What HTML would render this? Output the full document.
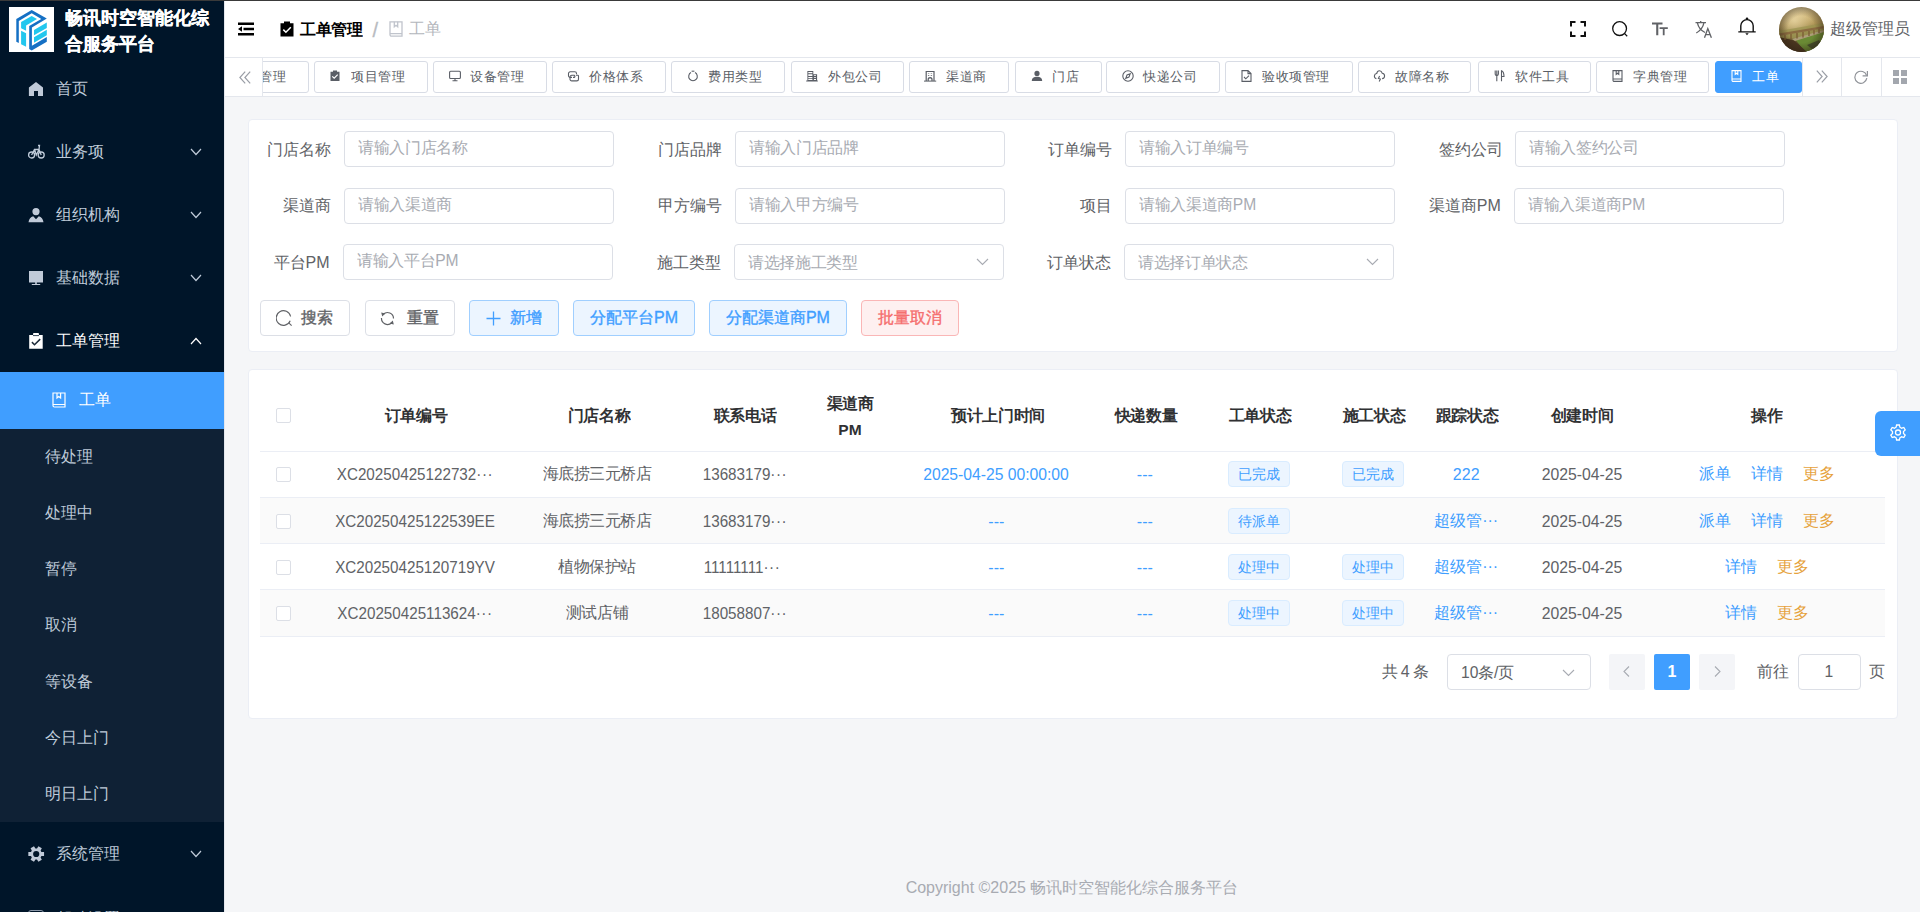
<!DOCTYPE html>
<html><head><meta charset="utf-8">
<style>
*{box-sizing:border-box;margin:0;padding:0}
html,body{width:1920px;height:912px;overflow:hidden}
body{position:relative;background:#f5f6f8;font-family:"Liberation Sans",sans-serif;font-size:16px;color:#606266}
.a{position:absolute}
.t{position:absolute;white-space:nowrap;line-height:16px}
#side{position:absolute;left:0;top:0;width:224px;height:912px;background:#001529;overflow:hidden}
#topline{position:absolute;left:0;top:0;width:1920px;height:1px;background:#3a3a3a;z-index:50}
#hdr{position:absolute;left:224px;top:0;width:1696px;height:58px;background:#fff;border-bottom:1px solid #e4e7ed}
#tabs{position:absolute;left:224px;top:58px;width:1696px;height:39px;background:#fff;border-bottom:1px solid #e4e7ed;overflow:hidden}
.tab{position:absolute;top:3px;height:32px;border:1px solid #d8dce5;border-radius:3px;background:#fff;font-size:13.5px;color:#5a5e66}
.tab .t{line-height:14px;top:8px;transform:scale(.97);transform-origin:0 50%}
.mi{position:absolute;left:0;width:224px;color:#bfcbd9}
.panel{position:absolute;background:#fff;border:1px solid #ebeef5;border-radius:4px}
.inp{position:absolute;width:270px;height:35.5px;border:1px solid #dcdfe6;border-radius:4px;background:#fff}
.inp .t{left:13px;top:8px;color:#a8abb2;font-size:16px;transform:scale(.977);transform-origin:0 50%}
.lbl{position:absolute;color:#606266;text-align:right}
.btn{position:absolute;top:300px;height:36px;border:1px solid #dcdfe6;border-radius:4px;background:#fff;color:#606266}
.btn .t{top:9px;-webkit-text-stroke:.35px currentColor}
.bb{background:#ecf5ff;border-color:#a0cfff;color:#409eff}
.br{background:#fef0f0;border-color:#fab6b6;color:#f56c6c}
.row{position:absolute;left:260px;width:1625px;height:46px;border-bottom:1px solid #ebeef5}
.ck{position:absolute;width:15px;height:15px;border:1px solid #dcdfe6;border-radius:2px;background:#fff}
.ctr{position:absolute;text-align:center;white-space:nowrap;line-height:16px}
.tag{position:absolute;width:62px;height:26px;background:#ecf5ff;border:1px solid #d9ecff;border-radius:4px;color:#409eff;font-size:14px;line-height:24px;text-align:center}
.blue{color:#409eff}
.orange{color:#e6a23c}
</style></head>
<body>
<div id="topline"></div>
<div class="a" style="left:224px;top:0;width:1px;height:912px;background:#e4e7ed;z-index:5"></div>

<!-- SIDEBAR -->
<div id="side">
  <div class="a" style="left:9px;top:7px;width:45px;height:45px;background:#fff">
    <svg width="45" height="45" viewBox="0 0 45 45">
      <path fill="#1570c4" d="M22.7 3 L7.3 12.1 L7.3 34.8 L9.8 36 L9.8 13.9 L22.7 6.3 L32.3 11.9 L20.2 18.9 L20.2 41.9 L22.7 43.4 L37.8 34.8 L37.8 30 L22.9 38.8 L22.9 20.4 L37.8 11.6 Z"/>
      <path fill="#22c7ee" d="M12.1 15.1 L22.7 9.1 L28 12.1 L17.1 18.4 L17.1 23.7 L12.1 21.2 Z M12.1 23.7 L17.1 26.2 L17.1 39.8 L12.1 37.3 Z M25 22.9 L37.8 15.4 L37.8 20.9 L25 28.2 Z M25 30.3 L37.8 22.7 L37.8 28.2 L25 35.8 Z"/>
    </svg>
  </div>
  <div class="t" style="left:65px;top:4.5px;font-size:18px;line-height:26px;font-weight:bold;color:#fff;-webkit-text-stroke:.25px #fff">畅讯时空智能化综<br>合服务平台</div>

  <!-- top-level items -->
  <svg class="a" style="left:28px;top:82px" width="16" height="15" viewBox="0 0 16 15"><path fill="#c0cad8" d="M8 0.1 L15 5.5 L15 14 L10 14 L10 9 L6 9 L6 14 L0.9 14 L0.9 5.5 Z"/></svg>
  <div class="t" style="left:56px;top:81px;color:#bfcbd9">首页</div>

  <svg class="a" style="left:28px;top:144px" width="17" height="15" viewBox="0 0 17 15"><g fill="none" stroke="#bfcbd9" stroke-width="1.3"><circle cx="3.6" cy="11" r="3"/><circle cx="13.2" cy="11" r="3"/><path d="M3.6 11 L6.5 5.5 L11 5.5 L13.2 11 M6.5 5.5 L8.3 11 L11 5.5 M10 1.5 L11.5 1.5 L11 5.5"/></g></svg>
  <div class="t" style="left:56px;top:144px;color:#bfcbd9">业务项</div>
  <svg class="a" style="left:190px;top:148px" width="12" height="8" viewBox="0 0 12 8"><path d="M1 1 L6 6.5 L11 1" fill="none" stroke="#bfcbd9" stroke-width="1.2"/></svg>

  <svg class="a" style="left:28px;top:207px" width="16" height="16" viewBox="0 0 16 16"><path fill="#c0cad8" d="M8 1 A3.6 3.6 0 1 1 8 8.2 A3.6 3.6 0 1 1 8 1 Z M0.5 15.2 C1 12 2.6 10 5.2 9.3 L8 12.2 L10.8 9.3 C13.4 10 15 12 15.5 15.2 Z"/></svg>
  <div class="t" style="left:56px;top:207px;color:#bfcbd9">组织机构</div>
  <svg class="a" style="left:190px;top:211px" width="12" height="8" viewBox="0 0 12 8"><path d="M1 1 L6 6.5 L11 1" fill="none" stroke="#bfcbd9" stroke-width="1.2"/></svg>

  <svg class="a" style="left:28px;top:270px" width="16" height="16" viewBox="0 0 16 16"><path fill="#c0cad8" d="M1 1 H15 V12.5 H1 Z M7.2 12.5 H8.8 V14 H7.2 Z M3.8 14 H12.2 V15 H3.8 Z"/></svg>
  <div class="t" style="left:56px;top:270px;color:#bfcbd9">基础数据</div>
  <svg class="a" style="left:190px;top:274px" width="12" height="8" viewBox="0 0 12 8"><path d="M1 1 L6 6.5 L11 1" fill="none" stroke="#bfcbd9" stroke-width="1.2"/></svg>

  <svg class="a" style="left:29px;top:332px" width="14" height="17" viewBox="0 0 14 17"><path fill="#fff" d="M0.2 3 H4 L4.3 1 H9.7 L10 3 H13.7 V16.7 H0.2 Z"/><path d="M4 3.6 H10" stroke="#001529" stroke-width="0.8"/><path d="M2.9 10.1 L5.5 12.7 L11.2 7.1" fill="none" stroke="#1d2b3a" stroke-width="1.5"/></svg>
  <div class="t" style="left:56px;top:333px;color:#fff">工单管理</div>
  <svg class="a" style="left:190px;top:337px" width="12" height="8" viewBox="0 0 12 8"><path d="M1 7 L6 1.5 L11 7" fill="none" stroke="#fff" stroke-width="1.2"/></svg>

  <!-- submenu -->
  <div class="a" style="left:0;top:372px;width:224px;height:450px;background:#0f2135"></div>
  <div class="a" style="left:0;top:372px;width:224px;height:57px;background:#409eff"></div>
  <svg class="a" style="left:52px;top:392px" width="14" height="16" viewBox="0 0 14 16"><g fill="none" stroke="#fff" stroke-width="1.2"><path d="M1 1 H13 V15 H2.5 A1.5 1.5 0 0 1 1 13.5 Z M1 12.5 H13"/><path d="M5 1 V6 L6.8 4.5 L8.6 6 V1"/></g></svg>
  <div class="t" style="left:79px;top:392px;color:#fff">工单</div>
  <div class="t" style="left:45px;top:449px;color:#bfcbd9">待处理</div>
  <div class="t" style="left:45px;top:505px;color:#bfcbd9">处理中</div>
  <div class="t" style="left:45px;top:561px;color:#bfcbd9">暂停</div>
  <div class="t" style="left:45px;top:617px;color:#bfcbd9">取消</div>
  <div class="t" style="left:45px;top:674px;color:#bfcbd9">等设备</div>
  <div class="t" style="left:45px;top:730px;color:#bfcbd9">今日上门</div>
  <div class="t" style="left:45px;top:786px;color:#bfcbd9">明日上门</div>

  <svg class="a" style="left:28px;top:846px" width="17" height="16" viewBox="0 0 17 16"><path fill="#c0cad8" fill-rule="evenodd" d="M13.39 5.90 L16.06 6.04 L16.06 9.96 L13.39 10.10 L12.61 11.45 L13.83 13.83 L10.43 15.79 L8.98 13.55 L7.42 13.55 L5.97 15.79 L2.57 13.83 L3.79 11.45 L3.01 10.10 L0.34 9.96 L0.34 6.04 L3.01 5.90 L3.79 4.55 L2.57 2.17 L5.97 0.21 L7.42 2.45 L8.98 2.45 L10.43 0.21 L13.83 2.17 L12.61 4.55 Z M11.30 8 A3.1 3.1 0 1 0 5.10 8 A3.1 3.1 0 1 0 11.30 8 Z"/></svg>
  <div class="t" style="left:56px;top:846px;color:#bfcbd9">系统管理</div>
  <svg class="a" style="left:190px;top:850px" width="12" height="8" viewBox="0 0 12 8"><path d="M1 1 L6 6.5 L11 1" fill="none" stroke="#bfcbd9" stroke-width="1.2"/></svg>

  <div class="a" style="left:28px;top:910px;width:16px;height:10px;border:1.5px solid #8a97a8;border-radius:3px"></div>
  <div class="t" style="left:56px;top:911px;color:#bfcbd9">帮助设置</div>
</div>

<!-- HEADER -->
<div id="hdr">
  <svg class="a" style="left:14px;top:22px" width="16" height="14" viewBox="0 0 16 14"><path fill="#000" d="M0 0.4 H16 V2.9 H0 Z M5.5 5.7 H16 V8.2 H5.5 Z M0 11.1 H16 V13.6 H0 Z M0 7 L4 4.3 V9.7 Z"/></svg>
  <svg class="a" style="left:56px;top:21px" width="14" height="16" viewBox="0 0 14 16"><path fill="#000" d="M0.5 2.2 H4 V0.6 H10 V2.2 H13.5 V15.4 H0.5 Z"/><path d="M3.3 8.6 L5.9 11.2 L10.8 6.3" fill="none" stroke="#fff" stroke-width="1.5"/></svg>
  <div class="t" style="left:76px;top:21.5px;font-weight:bold;color:#000;transform:scale(.97);transform-origin:0 50%">工单管理</div>
  <div class="t" style="left:148.5px;top:20px;color:#b8bbc1;font-size:20px;line-height:20px;-webkit-text-stroke:.3px #b8bbc1">/</div>
  <svg class="a" style="left:165px;top:21px" width="14" height="16" viewBox="0 0 14 16"><g fill="none" stroke="#c0c4cc" stroke-width="1.3"><path d="M1 0.8 H13 V15.2 H2.5 A1.5 1.5 0 0 1 1 13.7 Z M1 12.6 H13"/><path d="M5.3 0.8 V5.8 L7 4.3 L8.7 5.8 V0.8"/></g></svg>
  <div class="t" style="left:185px;top:21px;color:#b4b7bd">工单</div>

  <svg class="a" style="left:1346px;top:21px" width="16" height="16" viewBox="0 0 16 16"><path fill="none" stroke="#111" stroke-width="2" d="M1 5.5 V1 H5.5 M10.5 1 H15 V5.5 M15 10.5 V15 H10.5 M5.5 15 H1 V10.5"/></svg>
  <svg class="a" style="left:1388px;top:21px" width="16" height="16" viewBox="0 0 16 16"><g fill="none" stroke="#111" stroke-width="1.3"><circle cx="7.6" cy="7.6" r="6.9"/><path d="M12.4 12.4 L15.2 15.2"/></g></svg>
  <svg class="a" style="left:1428px;top:22px" width="16" height="14" viewBox="0 0 16 14"><path fill="#606266" d="M0 0.6 H10.5 V2.6 H6.3 V13.2 H4.2 V2.6 H0 Z M7.6 5.3 H15.8 V7.1 H12.6 V13.2 H10.8 V7.1 H7.6 Z"/></svg>
  <svg class="a" style="left:1471px;top:21px" width="18" height="17" viewBox="0 0 18 17"><g fill="none" stroke="#606266" stroke-width="1.3"><path d="M0.5 1.7 H11 M5.7 0 V1.7 M2.3 1.7 C3.5 7 6.5 10 10 11.5 M9 1.7 C8 6.5 5 10 1.3 12"/><path d="M9.5 16.8 L12.8 7.5 L16.4 16.8 M10.6 13.6 H15.2"/></g></svg>
  <svg class="a" style="left:1514px;top:17px" width="18" height="20" viewBox="0 0 18 20"><g fill="none" stroke="#111" stroke-width="1.4"><path d="M2.8 14.5 V8.8 A6.2 6.2 0 0 1 15.2 8.8 V14.5 M0.3 14.9 H17.7"/></g><circle cx="9" cy="1.7" r="1.3" fill="#111"/><path d="M7.3 16.2 H10.7 L9 18.3 Z" fill="#111"/></svg>
  <svg class="a" style="left:1555px;top:7px" width="45" height="45" viewBox="0 0 45 45">
    <defs><clipPath id="av"><circle cx="22.5" cy="22.5" r="22.5"/></clipPath>
    <linearGradient id="avg" x1="0" y1="0" x2="0.1" y2="1"><stop offset="0" stop-color="#eadcae"/><stop offset=".2" stop-color="#d6bd80"/><stop offset=".42" stop-color="#b49a5a"/><stop offset=".6" stop-color="#8a7a40"/><stop offset="1" stop-color="#3a2c1c"/></linearGradient>
    <radialGradient id="avs" cx=".35" cy=".3" r=".45"><stop offset="0" stop-color="#f6e6b8" stop-opacity=".6"/><stop offset="1" stop-color="#f6e6b8" stop-opacity="0"/></radialGradient>
    <radialGradient id="avv" cx=".5" cy=".5" r=".5"><stop offset=".6" stop-color="#2a1e10" stop-opacity="0"/><stop offset="1" stop-color="#2a1e10" stop-opacity=".45"/></radialGradient></defs>
    <g clip-path="url(#av)">
      <rect width="45" height="45" fill="url(#avg)"/>
      <rect width="45" height="45" fill="url(#avs)"/>
      <path d="M0 24 L45 16 L45 30 L0 32 Z" fill="#9c9450" opacity=".75"/>
      <path d="M16 32 L45 24.5 L45 40 L26 45 Z" fill="#6a8a34"/>
      <path d="M0 30 L15 33.5 L28 45 L0 45 Z" fill="#4a3620"/>
      <path d="M13 32 L45 23 L45 25 L16 34 Z" fill="#ad9d78"/>
      <path d="M0 26.5 L45 19 L45 21.3 L0 29 Z" fill="#8a6a40"/>
      <g stroke="#7a5a34" stroke-width="1.3"><path d="M6 28 V33 M12 27 V32.5 M18 26 V31.5 M24 25 V30.5 M30 24 V29 M35 23 V27.5 M40 22 V26"/></g>
      <path d="M28 38 L40 33 L43 37 L33 42 Z" fill="#2e2a26" opacity=".6"/>
      <rect width="45" height="45" fill="url(#avv)"/>
    </g>
  </svg>
  <div class="t" style="left:1606px;top:21px;color:#606266">超级管理员</div>
</div>

<!-- TABS -->
<div id="tabs">
  <div class="tab" style="left:-29.4px;width:114.0px"><svg class="a" style="left:15px;top:8px" width="12" height="12" viewBox="0 0 12 12" overflow="visible"><path fill="#5a5e66" d="M0.5 1.8 H3 V0.5 H7 V1.8 H9.5 V11 H0.5 Z"/><path d="M2.3 6.3 L4.2 8.2 L7.7 4.7" fill="none" stroke="#fff" stroke-width="1.2"/></svg><div class="t" style="left:36px">合同管理</div></div>
  <div class="tab" style="left:90.0px;width:114.0px"><svg class="a" style="left:15px;top:8px" width="12" height="12" viewBox="0 0 12 12" overflow="visible"><path fill="#5a5e66" d="M0.5 1.8 H3 V0.5 H7 V1.8 H9.5 V11 H0.5 Z"/><path d="M2.3 6.3 L4.2 8.2 L7.7 4.7" fill="none" stroke="#fff" stroke-width="1.2"/></svg><div class="t" style="left:36px">项目管理</div></div>
  <div class="tab" style="left:209.4px;width:113.5px"><svg class="a" style="left:15px;top:8px" width="12" height="12" viewBox="0 0 12 12" overflow="visible"><g fill="none" stroke="#5a5e66" stroke-width="1.1"><rect x="0.6" y="1.2" width="10.8" height="7.3" rx="1"/><path d="M6 8.5 V10.8 M3.5 10.8 H8.5"/></g></svg><div class="t" style="left:36px">设备管理</div></div>
  <div class="tab" style="left:328.4px;width:113.5px"><svg class="a" style="left:15px;top:8px" width="12" height="12" viewBox="0 0 12 12" overflow="visible"><g fill="none" stroke="#5a5e66" stroke-width="1.1"><path d="M4 7.4 H2.2 A1.7 1.7 0 0 1 0.5 5.7 V3.5 A1.7 1.7 0 0 1 2.2 1.8 H6.8 A1.7 1.7 0 0 1 8.5 3.5 V4.2"/><path d="M8 5.3 H9.8 A0.8 0.8 0 0 1 10.5 6 V9.2 A1.7 1.7 0 0 1 8.8 10.9 H3.7 A1.7 1.7 0 0 1 2 9.2 V7 A1.7 1.7 0 0 1 3.7 5.3 H6.3 A1.2 1.2 0 0 1 6.3 7.4 H5"/></g></svg><div class="t" style="left:36px">价格体系</div></div>
  <div class="tab" style="left:447.4px;width:113.5px"><svg class="a" style="left:15px;top:8px" width="12" height="12" viewBox="0 0 12 12" overflow="visible"><g fill="none" stroke="#5a5e66" stroke-width="1.1"><path d="M4 2.6 A4.3 4.3 0 1 0 8 2.6"/><path d="M4.6 1.2 H7.4"/></g></svg><div class="t" style="left:36px">费用类型</div></div>
  <div class="tab" style="left:566.5px;width:113.2px"><svg class="a" style="left:15px;top:8px" width="12" height="12" viewBox="0 0 12 12" overflow="visible"><path fill="#5a5e66" d="M0.4 0.9 H6.3 V11 H0.4 Z M6.3 4.2 H10.1 V11 H6.3 Z M-0.8 10.5 H10.8 V11.6 H-0.8 Z"/><path fill="#fff" d="M1.3 2.1 H5.4 V3.3 H1.3 Z M1.3 4.3 H5.4 V5.9 H1.3 Z M1.3 7 H5.4 V8.2 H1.3 Z M1.3 9 H5.4 V10.1 H1.3 Z M6.9 5.2 H9 V6 H6.9 Z M6.9 7.2 H9 V8 H6.9 Z M6.9 9.1 H9 V9.9 H6.9 Z"/></svg><div class="t" style="left:36px">外包公司</div></div>
  <div class="tab" style="left:685.4px;width:100.0px"><svg class="a" style="left:15px;top:8px" width="12" height="12" viewBox="0 0 12 12" overflow="visible"><g fill="none" stroke="#5a5e66" stroke-width="1.2"><path d="M1.2 11 V1.5 H9 V11"/><path d="M-1 11.1 H11.2" stroke-width="1"/></g><path fill="#5a5e66" d="M2.9 2.9 H4.3 V3.6 H2.9 Z M5.7 2.9 H7.1 V3.6 H5.7 Z M2.9 5.2 H4.3 V6 H2.9 Z M5.7 5.2 H7.1 V6 H5.7 Z M2.6 11 V9.2 C2.6 8 3.8 7.1 5.1 7.1 C6.4 7.1 7.6 8 7.6 9.2 V11 H6.4 V9.6 C6.4 9 5.8 8.5 5.1 8.5 C4.4 8.5 3.8 9 3.8 9.6 V11 Z"/></svg><div class="t" style="left:36px">渠道商</div></div>
  <div class="tab" style="left:790.5px;width:87.0px"><svg class="a" style="left:15px;top:8px" width="12" height="12" viewBox="0 0 12 12" overflow="visible"><path fill="#5a5e66" d="M6 0.8 A2.6 2.6 0 1 1 6 6 A2.6 2.6 0 1 1 6 0.8 Z M0.8 11 C0.8 8 3 6.8 6 6.8 C9 6.8 11.2 8 11.2 11 Z"/></svg><div class="t" style="left:36px">门店</div></div>
  <div class="tab" style="left:882.3px;width:114.0px"><svg class="a" style="left:15px;top:8px" width="12" height="12" viewBox="0 0 12 12" overflow="visible"><g fill="none" stroke="#5a5e66" stroke-width="1.1"><circle cx="6" cy="6" r="5.2"/><path d="M8.2 3.8 L5 5 L3.8 8.2 L7 7 Z"/></g></svg><div class="t" style="left:36px">快递公司</div></div>
  <div class="tab" style="left:1001.4px;width:127.5px"><svg class="a" style="left:15px;top:8px" width="12" height="12" viewBox="0 0 12 12" overflow="visible"><g fill="none" stroke="#5a5e66" stroke-width="1.1"><path d="M1 0.6 H7 L10 3.6 V11.4 H1 Z M7 0.6 V3.6 H10"/><path d="M3 7 L4.8 8.8 L8 5.6"/></g></svg><div class="t" style="left:36px">验收项管理</div></div>
  <div class="tab" style="left:1134.1px;width:113.3px"><svg class="a" style="left:15px;top:8px" width="12" height="12" viewBox="0 0 12 12" overflow="visible"><g fill="none" stroke="#5a5e66" stroke-width="1.1"><path d="M2.4 8.6 C1 8.4 0.3 7.3 0.4 5.9 C0.6 4.4 1.7 3.6 2.7 3.5 C3.1 1.8 4.2 0.8 5.4 0.8 C6.8 0.8 7.8 1.8 8.2 3.2 C9.6 3.4 10.6 4.5 10.6 6 C10.6 7.5 9.6 8.5 8.1 8.6"/><path d="M5.6 5.9 L4.4 8.5 L6.4 9 L5.2 11.6"/></g></svg><div class="t" style="left:36px">故障名称</div></div>
  <div class="tab" style="left:1253.5px;width:113.3px"><svg class="a" style="left:15px;top:8px" width="12" height="12" viewBox="0 0 12 12" overflow="visible"><g fill="none" stroke="#5a5e66" stroke-width="1.1"><path d="M1.2 0.6 V4 A1.6 1.6 0 0 0 4.4 4 V0.6 M2.8 0.6 V11.2 M7.5 11.2 V0.8 C9.5 1.5 10 4 10 6.5 H7.5"/></g></svg><div class="t" style="left:36px">软件工具</div></div>
  <div class="tab" style="left:1372.2px;width:113.3px"><svg class="a" style="left:15px;top:8px" width="12" height="12" viewBox="0 0 12 12" overflow="visible"><g fill="none" stroke="#5a5e66" stroke-width="1.1"><path d="M1 0.6 H10 V11.4 H2.2 A1.2 1.2 0 0 1 1 10.2 Z M1 9 H10"/><path d="M4.2 0.6 V4.3 L5.5 3.3 L6.8 4.3 V0.6"/></g></svg><div class="t" style="left:36px">字典管理</div></div>
  <div class="tab" style="left:1491.0px;width:87.0px;background:#409eff;border-color:#409eff;color:#fff"><svg class="a" style="left:15px;top:8px" width="12" height="12" viewBox="0 0 12 12" overflow="visible"><g fill="none" stroke="#fff" stroke-width="1.1"><path d="M1 0.6 H10 V11.4 H2.2 A1.2 1.2 0 0 1 1 10.2 Z M1 9 H10"/><path d="M4.2 0.6 V4.3 L5.5 3.3 L6.8 4.3 V0.6"/></g></svg><div class="t" style="left:36px">工单</div></div>
  <div class="a" style="left:0;top:0;width:39px;height:38px;background:#fff;border-right:1px solid #e4e7ed"></div>
  <svg class="a" style="left:15px;top:12.5px" width="12" height="13" viewBox="0 0 12 13"><path d="M6.2 0.7 L0.9 6.5 L6.2 12.3 M11.2 0.7 L5.9 6.5 L11.2 12.3" fill="none" stroke="#9a9ea6" stroke-width="1.2"/></svg>
  <div class="a" style="left:1578px;top:0;width:118px;height:38px;background:#fff"></div>
  <div class="a" style="left:1578px;top:0;width:1px;height:38px;background:#e4e7ed"></div>
  <div class="a" style="left:1617px;top:0;width:1px;height:38px;background:#e4e7ed"></div>
  <div class="a" style="left:1657px;top:0;width:1px;height:38px;background:#e4e7ed"></div>
  <svg class="a" style="left:1592px;top:12px" width="12" height="13" viewBox="0 0 12 13"><path d="M0.8 0.7 L6.1 6.5 L0.8 12.3 M5.8 0.7 L11.1 6.5 L5.8 12.3" fill="none" stroke="#9a9ea6" stroke-width="1.2"/></svg>
  <svg class="a" style="left:1630px;top:12px" width="14" height="14" viewBox="0 0 14 14"><path d="M12.6 5.5 A6 6 0 1 0 12.8 8.2" fill="none" stroke="#909399" stroke-width="1.2"/><path d="M13.4 1 V5.9 H8.6" fill="none" stroke="#909399" stroke-width="1.2"/></svg>
  <svg class="a" style="left:1669px;top:12px" width="14" height="14" viewBox="0 0 14 14"><path fill="#a3a7ae" d="M0 0 H6 V6 H0 Z M8 0 H14 V6 H8 Z M0 8 H6 V14 H0 Z M8 8 H14 V14 H8 Z"/></svg>
</div>

<!-- FORM -->
<div class="panel" style="left:248px;top:119px;width:1650px;height:233px"></div>
<div class="lbl t" style="left:230.5px;top:141.5px;width:100px">门店名称</div>
<div class="inp" style="left:344.0px;top:131.2px"><div class="t">请输入门店名称</div></div>
<div class="lbl t" style="left:621.5px;top:141.5px;width:100px">门店品牌</div>
<div class="inp" style="left:735.0px;top:131.2px"><div class="t">请输入门店品牌</div></div>
<div class="lbl t" style="left:1011.5px;top:141.5px;width:100px">订单编号</div>
<div class="inp" style="left:1125.0px;top:131.2px"><div class="t">请输入订单编号</div></div>
<div class="lbl t" style="left:1402.8px;top:141.5px;width:100px">签约公司</div>
<div class="inp" style="left:1515.0px;top:131.2px"><div class="t">请输入签约公司</div></div>
<div class="lbl t" style="left:230.5px;top:198.3px;width:100px">渠道商</div>
<div class="inp" style="left:344.0px;top:188px"><div class="t">请输入渠道商</div></div>
<div class="lbl t" style="left:621.5px;top:198.3px;width:100px">甲方编号</div>
<div class="inp" style="left:735.0px;top:188px"><div class="t">请输入甲方编号</div></div>
<div class="lbl t" style="left:1011.5px;top:198.3px;width:100px">项目</div>
<div class="inp" style="left:1125.0px;top:188px"><div class="t">请输入渠道商PM</div></div>
<div class="lbl t" style="left:1400.8px;top:198.3px;width:100px">渠道商PM</div>
<div class="inp" style="left:1514.0px;top:188px"><div class="t">请输入渠道商PM</div></div>
<div class="lbl t" style="left:229.5px;top:254.6px;width:100px">平台PM</div>
<div class="inp" style="left:343.0px;top:244px"><div class="t">请输入平台PM</div></div>
<div class="lbl t" style="left:620.5px;top:254.6px;width:100px">施工类型</div>
<div class="inp" style="left:734.0px;top:244px"><div class="t" style="top:10px">请选择施工类型</div><svg class="a" style="left:241px;top:13px" width="13" height="8" viewBox="0 0 13 8"><path d="M1 1 L6.5 6.5 L12 1" fill="none" stroke="#a8abb2" stroke-width="1.1"/></svg></div>
<div class="lbl t" style="left:1010.5px;top:254.6px;width:100px">订单状态</div>
<div class="inp" style="left:1124.0px;top:244px"><div class="t" style="top:10px">请选择订单状态</div><svg class="a" style="left:241px;top:13px" width="13" height="8" viewBox="0 0 13 8"><path d="M1 1 L6.5 6.5 L12 1" fill="none" stroke="#a8abb2" stroke-width="1.1"/></svg></div>
<div class="btn " style="left:260.3px;width:90.0px"><svg class="a" style="left:15px;top:9px" width="17" height="17" viewBox="0 0 17 17"><g fill="none" stroke="#606266" stroke-width="1.1"><path d="M14.2 10.8 A7.3 7.3 0 1 1 14.6 6.5"/><path d="M12.8 12.8 L15.6 15.6"/></g></svg><div class="t" style="left:40px">搜索</div></div>
<div class="btn " style="left:364.5px;width:90.0px"><svg class="a" style="left:14.5px;top:10px" width="15" height="15" viewBox="0 0 15 15"><g fill="none" stroke="#606266" stroke-width="1.2"><path d="M3.3 3.3 A6 6 0 0 1 13.5 7.6"/><path d="M1.5 7 A6 6 0 0 0 11.7 11.7"/></g><path fill="#606266" d="M1.2 1.6 L5.4 2.4 L2.2 5.6 Z M13.8 13.4 L9.6 12.6 L12.8 9.4 Z"/></svg><div class="t" style="left:41px">重置</div></div>
<div class="btn bb" style="left:469.2px;width:89.5px"><svg class="a" style="left:16px;top:10px" width="15" height="15" viewBox="0 0 15 15"><path d="M7.5 0.5 V14.5 M0.5 7.5 H14.5" fill="none" stroke="#409eff" stroke-width="1.3"/></svg><div class="t" style="left:40px">新增</div></div>
<div class="btn bb" style="left:573.4px;width:121.3px"><div class="t" style="left:0;width:100%;text-align:center">分配平台PM</div></div>
<div class="btn bb" style="left:709.2px;width:137.4px"><div class="t" style="left:0;width:100%;text-align:center">分配渠道商PM</div></div>
<div class="btn br" style="left:860.5px;width:98.2px"><div class="t" style="left:0;width:100%;text-align:center">批量取消</div></div>
<!-- TABLE -->
<div class="panel" style="left:248px;top:369px;width:1650px;height:350px"></div>
<div class="a" style="left:260px;top:451px;width:1625px;height:1px;background:#ebeef5"></div>
<div class="a" style="left:260px;top:497px;width:1625px;height:1px;background:#ebeef5"></div>
<div class="a" style="left:260px;top:498px;width:1625px;height:45px;background:#fafafa"></div>
<div class="a" style="left:260px;top:543px;width:1625px;height:1px;background:#ebeef5"></div>
<div class="a" style="left:260px;top:589px;width:1625px;height:1px;background:#ebeef5"></div>
<div class="a" style="left:260px;top:590px;width:1625px;height:46px;background:#fafafa"></div>
<div class="a" style="left:260px;top:636px;width:1625px;height:1px;background:#ebeef5"></div>
<div class="ck" style="left:276px;top:408px"></div>
<div class="ctr" style="left:296.0px;top:408.0px;width:240px;font-weight:bold;color:#303133;transform:scale(.97)">订单编号</div>
<div class="ctr" style="left:478.7px;top:408.0px;width:240px;font-weight:bold;color:#303133;transform:scale(.97)">门店名称</div>
<div class="ctr" style="left:624.7px;top:408.0px;width:240px;font-weight:bold;color:#303133;transform:scale(.97)">联系电话</div>
<div class="ctr" style="left:877.8px;top:408.0px;width:240px;font-weight:bold;color:#303133;transform:scale(.97)">预计上门时间</div>
<div class="ctr" style="left:1025.8px;top:408.0px;width:240px;font-weight:bold;color:#303133;transform:scale(.97)">快递数量</div>
<div class="ctr" style="left:1139.8px;top:408.0px;width:240px;font-weight:bold;color:#303133;transform:scale(.97)">工单状态</div>
<div class="ctr" style="left:1253.5px;top:408.0px;width:240px;font-weight:bold;color:#303133;transform:scale(.97)">施工状态</div>
<div class="ctr" style="left:1347.2px;top:408.0px;width:240px;font-weight:bold;color:#303133;transform:scale(.97)">跟踪状态</div>
<div class="ctr" style="left:1461.9px;top:408.0px;width:240px;font-weight:bold;color:#303133;transform:scale(.97)">创建时间</div>
<div class="ctr" style="left:1647.4px;top:408.0px;width:240px;font-weight:bold;color:#303133;transform:scale(.97)">操作</div>
<div class="ctr" style="left:790px;top:390px;width:120px;font-weight:bold;color:#303133;line-height:27px;transform:scale(.97)">渠道商<br>PM</div>
<div class="ck" style="left:276px;top:466.5px"></div>
<div class="ctr" style="left:294.5px;top:467.0px;width:240px;transform:scaleX(.95)">XC20250425122732<span style="letter-spacing:.6px">···</span></div>
<div class="ctr" style="left:476.7px;top:466.0px;width:240px;transform:scale(.973)">海底捞三元桥店</div>
<div class="ctr" style="left:624.7px;top:467.0px;width:240px;transform:scaleX(.95)">13683179<span style="letter-spacing:.6px">···</span></div>
<div class="ctr" style="left:876.3px;top:467.0px;width:240px;color:#409eff;transform:scaleX(.98)">2025-04-25 00:00:00</div>
<div class="ctr" style="left:1024.8px;top:467.0px;width:240px;color:#409eff;transform:none">---</div>
<div class="tag" style="left:1227.8px;top:461px">已完成</div>
<div class="tag" style="left:1341.5px;top:461px">已完成</div>
<div class="ctr" style="left:1346.2px;top:467.0px;width:240px;color:#409eff;transform:none">222</div>
<div class="ctr" style="left:1461.9px;top:467.0px;width:240px;transform:scaleX(.985)">2025-04-25</div>
<div class="t" style="left:1699.3px;top:466px;color:#409eff">派单</div>
<div class="t" style="left:1750.8px;top:466px;color:#409eff">详情</div>
<div class="t" style="left:1802.7px;top:466px;color:#e6a23c">更多</div>
<div class="ck" style="left:276px;top:513.5px"></div>
<div class="ctr" style="left:294.5px;top:514.0px;width:240px;transform:scaleX(.95)">XC20250425122539EE</div>
<div class="ctr" style="left:476.7px;top:513.0px;width:240px;transform:scale(.973)">海底捞三元桥店</div>
<div class="ctr" style="left:624.7px;top:514.0px;width:240px;transform:scaleX(.95)">13683179<span style="letter-spacing:.6px">···</span></div>
<div class="ctr" style="left:876.3px;top:514.0px;width:240px;color:#409eff;transform:none">---</div>
<div class="ctr" style="left:1024.8px;top:514.0px;width:240px;color:#409eff;transform:none">---</div>
<div class="tag" style="left:1227.8px;top:508px">待派单</div>
<div class="ctr" style="left:1346.2px;top:513.0px;width:240px;color:#409eff;transform:none">超级管<span style="letter-spacing:0px">···</span></div>
<div class="ctr" style="left:1461.9px;top:514.0px;width:240px;transform:scaleX(.985)">2025-04-25</div>
<div class="t" style="left:1699.3px;top:513px;color:#409eff">派单</div>
<div class="t" style="left:1750.8px;top:513px;color:#409eff">详情</div>
<div class="t" style="left:1802.7px;top:513px;color:#e6a23c">更多</div>
<div class="ck" style="left:276px;top:559.5px"></div>
<div class="ctr" style="left:294.5px;top:560.0px;width:240px;transform:scaleX(.95)">XC20250425120719YV</div>
<div class="ctr" style="left:476.7px;top:559.0px;width:240px;transform:scale(.973)">植物保护站</div>
<div class="ctr" style="left:621.7px;top:560.0px;width:240px;transform:scaleX(.95)">11111111<span style="letter-spacing:.6px">···</span></div>
<div class="ctr" style="left:876.3px;top:560.0px;width:240px;color:#409eff;transform:none">---</div>
<div class="ctr" style="left:1024.8px;top:560.0px;width:240px;color:#409eff;transform:none">---</div>
<div class="tag" style="left:1227.8px;top:554px">处理中</div>
<div class="tag" style="left:1341.5px;top:554px">处理中</div>
<div class="ctr" style="left:1346.2px;top:559.0px;width:240px;color:#409eff;transform:none">超级管<span style="letter-spacing:0px">···</span></div>
<div class="ctr" style="left:1461.9px;top:560.0px;width:240px;transform:scaleX(.985)">2025-04-25</div>
<div class="t" style="left:1725.4px;top:559px;color:#409eff">详情</div>
<div class="t" style="left:1776.9px;top:559px;color:#e6a23c">更多</div>
<div class="ck" style="left:276px;top:605.5px"></div>
<div class="ctr" style="left:294.5px;top:606.0px;width:240px;transform:scaleX(.95)">XC20250425113624<span style="letter-spacing:.6px">···</span></div>
<div class="ctr" style="left:476.7px;top:605.0px;width:240px;transform:scale(.973)">测试店铺</div>
<div class="ctr" style="left:624.7px;top:606.0px;width:240px;transform:scaleX(.95)">18058807<span style="letter-spacing:.6px">···</span></div>
<div class="ctr" style="left:876.3px;top:606.0px;width:240px;color:#409eff;transform:none">---</div>
<div class="ctr" style="left:1024.8px;top:606.0px;width:240px;color:#409eff;transform:none">---</div>
<div class="tag" style="left:1227.8px;top:600px">处理中</div>
<div class="tag" style="left:1341.5px;top:600px">处理中</div>
<div class="ctr" style="left:1346.2px;top:605.0px;width:240px;color:#409eff;transform:none">超级管<span style="letter-spacing:0px">···</span></div>
<div class="ctr" style="left:1461.9px;top:606.0px;width:240px;transform:scaleX(.985)">2025-04-25</div>
<div class="t" style="left:1725.4px;top:605px;color:#409eff">详情</div>
<div class="t" style="left:1776.9px;top:605px;color:#e6a23c">更多</div>
<div class="t" style="left:1382px;top:664px;color:#606266;word-spacing:-1.6px">共 4 条</div>
<div class="inp" style="left:1447px;top:654px;width:144px;height:36px"><div class="t" style="left:13px;top:10px;color:#606266;font-size:16px">10条/页</div><svg class="a" style="left:114px;top:14px" width="13" height="8" viewBox="0 0 13 8"><path d="M1 1 L6.5 6.5 L12 1" fill="none" stroke="#a8abb2" stroke-width="1.1"/></svg></div>
<div class="a" style="left:1609px;top:654px;width:36px;height:36px;background:#f4f5f8;border-radius:2px"><svg class="a" style="left:14px;top:12px" width="7" height="11" viewBox="0 0 7 11"><path d="M6 0.5 L1 5.5 L6 10.5" fill="none" stroke="#a8abb2" stroke-width="1.1"/></svg></div>
<div class="a" style="left:1654px;top:654px;width:36px;height:36px;background:#409eff;border-radius:2px;color:#fff;font-weight:bold;text-align:center;line-height:36px;font-size:16px">1</div>
<div class="a" style="left:1699px;top:654px;width:36px;height:36px;background:#f4f5f8;border-radius:2px"><svg class="a" style="left:15px;top:12px" width="7" height="11" viewBox="0 0 7 11"><path d="M1 0.5 L6 5.5 L1 10.5" fill="none" stroke="#a8abb2" stroke-width="1.1"/></svg></div>
<div class="t" style="left:1757px;top:664px;color:#606266">前往</div>
<div class="inp" style="left:1798px;top:654px;width:63px;height:36px"><div class="t" style="left:0;width:61px;text-align:center;top:9px;color:#606266;font-size:16px">1</div></div>
<div class="t" style="left:1869px;top:664px;color:#606266">页</div>
<div class="a" style="left:1875px;top:411px;width:45px;height:45px;background:#409eff;border-radius:6px 0 0 6px"><svg class="a" style="left:14px;top:13px" width="18" height="18" viewBox="0 0 18 18"><g fill="none" stroke="#fff" stroke-width="1.3"><path d="M7.6 1 H10.4 L10.9 3.2 L12.6 4.2 L14.8 3.5 L16.2 5.9 L14.5 7.5 V9.5 L16.2 11.1 L14.8 13.5 L12.6 12.8 L10.9 13.8 L10.4 16 H7.6 L7.1 13.8 L5.4 12.8 L3.2 13.5 L1.8 11.1 L3.5 9.5 V7.5 L1.8 5.9 L3.2 3.5 L5.4 4.2 L7.1 3.2 Z"/><circle cx="9" cy="8.5" r="2.5"/></g></svg></div>
<div class="ctr" style="left:872px;top:880px;width:400px;color:#a8abb2">Copyright ©2025 畅讯时空智能化综合服务平台</div>
</body></html>
